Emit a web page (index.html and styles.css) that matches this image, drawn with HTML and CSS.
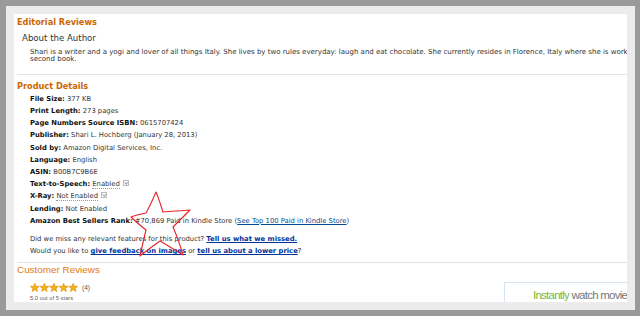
FILE: index.html
```html
<!DOCTYPE html>
<html lang="en">
<head>
    <meta charset="UTF-8">
    <title>Kindle Book | Product Details</title>
    <link rel="stylesheet" href="styles.css">
</head>
<body>
    <div class="frame">
        <div class="page">
            <!-- Editorial Reviews -->
            <h2 class="section-title">Editorial Reviews</h2>
            <h3 class="sub-title">About the Author</h3>
            <p class="author-bio">Shari is a writer and a yogi and lover of all things Italy. She lives by two rules everyday: laugh and eat chocolate. She currently resides in Florence, Italy where she is working on her second book.</p>

            <hr class="divider">

            <!-- Product Details -->
            <h2 class="section-title">Product Details</h2>
            <ul class="details">
                <li><b>File Size:</b> 377 KB</li>
                <li><b>Print Length:</b> 273 pages</li>
                <li><b>Page Numbers Source ISBN:</b> 0615707424</li>
                <li><b>Publisher:</b> Shari L. Hochberg (January 28, 2013)</li>
                <li><b>Sold by:</b> Amazon Digital Services, Inc.</li>
                <li><b>Language:</b> English</li>
                <li><b>ASIN:</b> B00B7C9B6E</li>
                <li><b>Text-to-Speech:</b> <span class="dotted">Enabled</span> <i class="drop"></i></li>
                <li><b>X-Ray:</b> <span class="dotted">Not Enabled</span> <i class="drop"></i></li>
                <li><b>Lending:</b> Not Enabled</li>
                <li><b>Amazon Best Sellers Rank:</b> #70,869 Paid in Kindle Store (<a href="#" class="plain-link">See Top 100 Paid in Kindle Store</a>)</li>
            </ul>
            <p class="feedback">Did we miss any relevant features for this product? <a href="#">Tell us what we missed.</a></p>
            <p class="feedback">Would you like to <a href="#">give feedback on images</a> or <a href="#">tell us about a lower price</a>?</p>

            <hr class="divider">

            <!-- Customer Reviews -->
            <div class="reviews-row">
                <div class="reviews">
                    <h2 class="reviews-title">Customer Reviews</h2>
                    <div class="rating">
                        <svg class="stars" width="48" height="9" viewBox="0 0 48 9">
                            <defs>
                                <polygon id="star" points="4.8,0.3 6,3.3 9.3,3.4 6.7,5.4 7.6,8.6 4.8,6.8 2,8.6 2.9,5.4 0.3,3.4 3.6,3.3" fill="#f5b21b" stroke="#e08a00" stroke-width="0.6" stroke-linejoin="round"/>
                            </defs>
                            <use href="#star" x="0"/>
                            <use href="#star" x="9.6"/>
                            <use href="#star" x="19.2"/>
                            <use href="#star" x="28.8"/>
                            <use href="#star" x="38.4"/>
                        </svg>
                        <span class="count">(4)</span>
                    </div>
                    <div class="avg">5.0 out of 5 stars</div>
                </div>
                <div class="promo">
                    <span class="promo-green">Instantly</span> watch movies
                </div>
            </div>

            <!-- hand drawn annotation -->
            <svg class="scribble" width="80" height="80" viewBox="0 0 80 80">
                <path d="M31 7 C34 14 36 21 38 27 C47 26 56 26 65 25 C59 31 53 37 48 42 C52 51 55 60 58 70 C50 65 42 60 35 56 C28 61 21 66 15 71 C17 62 19 53 21 45 C16 41 11 37 6 32 C11 30 16 29 21 28 C25 21 28 14 31 7 Z" fill="none" stroke="#e8232a" stroke-width="1.1" stroke-linejoin="round"/>
            </svg>
        </div>
    </div>
</body>
</html>
```

FILE: styles.css
```css
body {
    margin: 0;
    padding: 6px 0 0 6px;
    background-color: #9a9a9a;
    font-family: "DejaVu Sans", Verdana, sans-serif;
    color: #333333;
}
.frame {
    width: 613px;
    height: 288px;
    padding: 8px;
    background-color: #ececec;
}
.page {
    position: relative;
    width: 610px;
    height: 288px;
    padding-left: 3px;
    background-color: #ffffff;
    overflow: hidden;
}
.section-title {
    margin: 3px 0 0;
    font-size: 8.2px;
    line-height: 10px;
    font-weight: bold;
    color: #cc6600;
}
.sub-title {
    margin: 6px 0 0 5px;
    font-size: 8.6px;
    line-height: 10px;
    font-weight: normal;
    color: #333333;
}
.author-bio {
    width: 655px;
    margin: 6px 0 0 13px;
    font-size: 7px;
    line-height: 7.4px;
    color: #333333;
}
.divider {
    margin: 10px 0 0;
    border: 0;
    border-top: 1px solid #e3e3e3;
    width: 640px;
}
.divider + .section-title {
    margin-top: 6px;
}
.details {
    list-style: none;
    margin: 2px 0 0 13px;
    padding: 0;
    font-size: 6.8px;
    line-height: 12.2px;
    color: #333333;
}
.details b {
    color: #111111;
}
.dotted {
    border-bottom: 1px dotted #999999;
}
.drop {
    display: inline-block;
    width: 4px;
    height: 4px;
    margin-left: 1px;
    border: 1px solid #bbbbbb;
    vertical-align: 0;
    position: relative;
}
.drop::after {
    content: "";
    position: absolute;
    left: 1px;
    top: 0;
    width: 1.5px;
    height: 1.5px;
    border-right: 1px solid #999999;
    border-bottom: 1px solid #999999;
    transform: rotate(45deg);
}
.plain-link {
    color: #004b91;
    text-decoration: underline;
}
.feedback {
    margin: 0 0 0 13px;
    font-size: 6.8px;
    line-height: 12.2px;
    color: #333333;
}
.details + .feedback {
    margin-top: 6px;
}
.feedback a {
    color: #003399;
    font-weight: bold;
    text-decoration: underline;
}
.feedback + .divider {
    margin-top: 5px;
}
.reviews-row {
    display: flex;
    align-items: flex-start;
    justify-content: space-between;
}
.reviews-title {
    margin: 1px 0 0;
    font-family: "Liberation Sans", Arial, sans-serif;
    font-size: 9.9px;
    line-height: 12px;
    font-weight: normal;
    color: #e47911;
}
.rating {
    display: flex;
    align-items: center;
    gap: 4px;
    margin: 7px 0 0 13px;
    height: 9px;
}
.stars {
    display: block;
}
.count {
    font-family: "Liberation Sans", Arial, sans-serif;
    font-size: 6.5px;
    color: #555555;
}
.avg {
    margin: 2px 0 0 13px;
    font-family: "Liberation Sans", Arial, sans-serif;
    font-size: 5.8px;
    line-height: 8px;
    color: #666666;
}
.promo {
    width: 108px;
    height: 30px;
    margin: 19px -14px 0 0;
    padding: 6px 0 0 28px;
    border: 1px solid #d6e4f2;
    border-right: 0;
    font-family: "Liberation Sans", Arial, sans-serif;
    font-size: 11.5px;
    line-height: 12px;
    letter-spacing: -0.75px;
    color: #777777;
    white-space: nowrap;
}
.promo-green {
    color: #76b83a;
}
.scribble {
    position: absolute;
    left: 111px;
    top: 171px;
}
```
